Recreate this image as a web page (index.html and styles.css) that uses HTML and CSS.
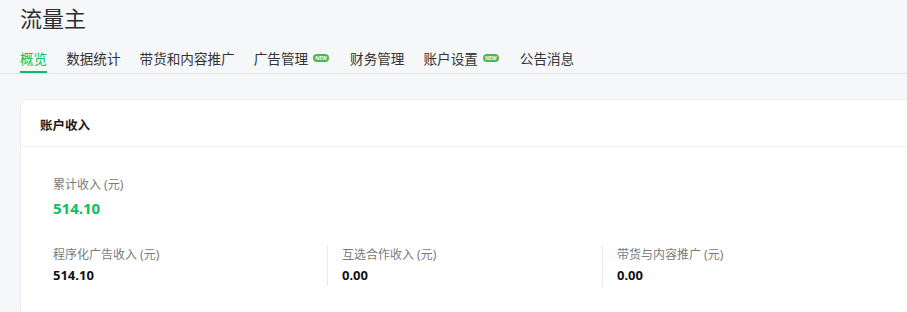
FILE: index.html
```html
<!DOCTYPE html>
<html lang="zh-CN">
<head>
    <meta charset="UTF-8">
    <meta name="viewport" content="width=device-width, initial-scale=1.0">
    <title>流量主</title>
    <link rel="stylesheet" href="styles.css">
</head>
<body>
    <header class="page-header">
        <h1 class="page-title">流量主</h1>
    </header>

    <nav class="tabs">
        <a class="tab active">概览</a>
        <a class="tab">数据统计</a>
        <a class="tab">带货和内容推广</a>
        <a class="tab">广告管理<span class="badge-new">NEW</span></a>
        <a class="tab">财务管理</a>
        <a class="tab">账户设置<span class="badge-new">NEW</span></a>
        <a class="tab">公告消息</a>
    </nav>

    <main class="content">
        <section class="card">
            <div class="card-header">账户收入</div>
            <div class="card-body">
                <div class="total">
                    <div class="stat-label">累计收入 (元)</div>
                    <div class="total-value">514.10</div>
                </div>
                <div class="stat-row">
                    <div class="stat-col">
                        <div class="stat-label">程序化广告收入 (元)</div>
                        <div class="stat-value">514.10</div>
                    </div>
                    <div class="stat-col">
                        <div class="stat-label">互选合作收入 (元)</div>
                        <div class="stat-value">0.00</div>
                    </div>
                    <div class="stat-col">
                        <div class="stat-label">带货与内容推广 (元)</div>
                        <div class="stat-value">0.00</div>
                    </div>
                </div>
            </div>
        </section>
    </main>
</body>
</html>
```

FILE: styles.css
```css
* {
    margin: 0;
    padding: 0;
    box-sizing: border-box;
}

body {
    background: #f6f7f9;
    font-family: 'Noto Sans', 'Noto Sans CJK SC', sans-serif;
    color: #333;
    overflow: hidden;
}

.page-header {
    padding: 3px 20px 0;
}

.page-title {
    font-size: 22px;
    line-height: 30px;
    font-weight: 400;
    color: #2e2e2e;
}

.tabs {
    display: flex;
    gap: 19px;
    margin-top: 16px;
    padding: 0 20px;
    border-bottom: 1px solid #e3e4e6;
}

.tab {
    display: flex;
    align-items: center;
    font-size: 13.6px;
    line-height: 20px;
    padding-bottom: 2px;
    border-bottom: 2px solid transparent;
    color: #333;
    cursor: pointer;
}

.tab.active {
    color: #07c160;
    border-bottom-color: #07c160;
}

.badge-new {
    display: inline-block;
    margin: 0 2px 3px 5px;
    width: 16px;
    height: 8px;
    border-radius: 4px;
    background: #4bb752;
    color: white;
    font-size: 5px;
    line-height: 8px;
    font-weight: 700;
    text-align: center;
}

.content {
    padding: 25px 0 0 20px;
}

.card {
    width: 1000px;
    background: white;
    border: 1px solid #eceef1;
    border-radius: 6px;
}

.card-header {
    height: 47px;
    padding: 2px 19px 0;
    display: flex;
    align-items: center;
    font-size: 12.5px;
    font-weight: 700;
    color: #1a1a1a;
    border-bottom: 1px solid #eef0f2;
}

.card-body {
    padding: 29px 32px 30px;
}

.stat-label {
    font-size: 12px;
    line-height: 18px;
    color: #7a7a7a;
}

.total-value {
    margin-top: 2px;
    font-size: 15px;
    line-height: 24px;
    font-weight: 700;
    color: #07c160;
}

.stat-row {
    display: flex;
    margin-top: 26px;
}

.stat-col {
    width: 275px;
    height: 40px;
}

.stat-col:first-child {
    width: 274px;
}

.stat-col + .stat-col {
    border-left: 1px solid #e8e9eb;
    padding-left: 14px;
}

.stat-value {
    margin-top: 1px;
    font-size: 13px;
    line-height: 20px;
    font-weight: 700;
    color: #111;
}
```
